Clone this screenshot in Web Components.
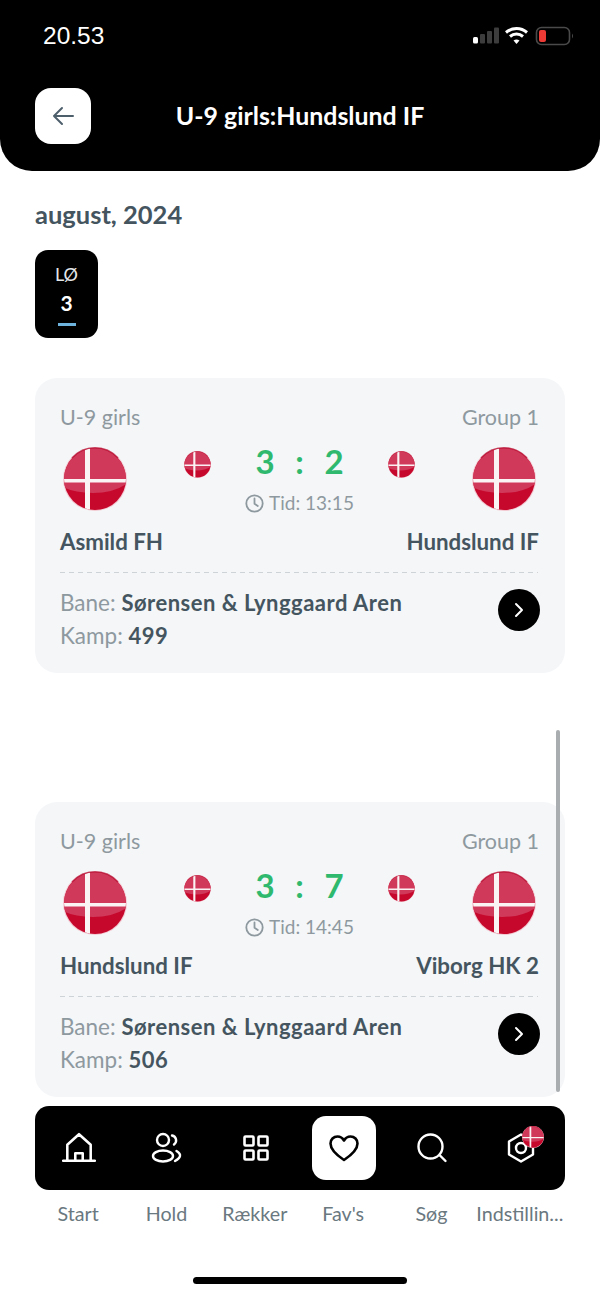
<!DOCTYPE html>
<html lang="da"><head><meta charset="utf-8"><title>U-9 girls</title>
<style>html,body{margin:0;padding:0;background:#fff}body{width:600px;height:1297px;overflow:hidden;font-family:Lato,"Open Sans",sans-serif}</style>
</head><body>
<app-screen></app-screen>
<script>
const def=(name,html,init)=>customElements.define(name,class extends HTMLElement{
  constructor(){super();this.attachShadow({mode:'open'}).innerHTML=typeof html==='function'?html(this):html;}
  connectedCallback(){ if(!this._r&&typeof html==='function'){this._r=1;this.shadowRoot.innerHTML=html(this);} }
});
let uid=0;
def('dk-flag',el=>{const s=el.getAttribute('size')||64;const id='c'+(++uid);return `<style>:host{display:block;width:${s}px;height:${s}px}svg{display:block;width:100%;height:100%}</style>
<svg viewBox="0 0 64 64"><defs><clipPath id="${id}"><circle cx="32" cy="32" r="31"/></clipPath></defs>
<circle cx="32" cy="32" r="32" fill="#f3c9d2"/>
<g clip-path="url(#${id})"><rect width="64" height="64" fill="#c6082d"/>
<path d="M-2-2H66V35Q52 46 30 46 10 46-2 39Z" fill="#d0395a"/>
<rect x="22" width="5" height="64" fill="#fbf4f5"/><rect y="32" width="64" height="3.500" fill="#fbf4f5"/></g>
<path d="M9 11A31 31 0 0 1 55 11" fill="none" stroke="#b3082c" stroke-width="1.4" opacity=".7"/></svg>`});

def('status-bar',`<style>:host{display:flex;justify-content:space-between;align-items:center;height:72px;padding:0 26px 0 43px;color:#fff}
.t{font:500 24.500px/1 "Liberation Sans",sans-serif}svg{display:block}</style>
<span class="t">20.53</span>
<svg width="102" height="20" viewBox="0 0 102 20">
<rect x="1" y="11" width="5" height="6.500" rx="1.500" fill="#fff"/><rect x="8" y="8" width="5" height="9.500" rx="1" fill="#3d3d3d"/><rect x="15" y="5" width="5" height="12.500" rx="1" fill="#3d3d3d"/><rect x="22" y="1.500" width="5" height="16" rx="1" fill="#3d3d3d"/>
<g fill="none" stroke="#fff" stroke-width="3"><path d="M34 6.500A16 16 0 0 1 55 6.500"/><path d="M38 10.500A10 10 0 0 1 51 10.500"/></g><path d="M41.500 14.500A5 5 0 0 1 47.500 14.500L44.500 18Z" fill="#fff"/>
<rect x="64.500" y="1.500" width="33" height="17" rx="5" fill="none" stroke="#4a4a4a" stroke-width="1.600"/><rect x="67" y="4" width="7" height="12" rx="2" fill="#ee3a35"/><path d="M100 7.500Q102 10 100 12.500Z" fill="#4a4a4a"/>
</svg>`);

def('app-header',el=>`<style>:host{display:block;height:171px;background:#000;border-radius:0 0 32px 32px;box-sizing:border-box}
.row{display:grid;grid-template-columns:56px 1fr 56px;align-items:center;margin:16px 35px 0}
button{all:unset;width:56px;height:56px;background:#fff;border-radius:16px;display:flex;align-items:center;justify-content:center}
h1{margin:-2px 0 0;text-align:center;color:#fff;font:700 24.900px/1 Lato,sans-serif}</style>
<status-bar></status-bar>
<div class="row"><button aria-label="Tilbage"><svg width="22" height="20" viewBox="0 0 22 20" fill="none" stroke="#4d5f6b" stroke-width="2" stroke-linecap="round" stroke-linejoin="round"><path d="M21 10H2M10 2 2 10l8 8"/></svg></button>
<h1>${el.getAttribute('title')}</h1><span></span></div>`);

def('day-chip',el=>`<style>:host{display:flex;flex-direction:column;align-items:center;width:63px;height:88px;background:#000;border-radius:13px;color:#fff;box-sizing:border-box;padding-top:14px}
.d{font:400 18px/20px Lato,sans-serif;color:#e4e7e9}.n{font:700 21px/24px Lato,sans-serif;margin-top:7px}i{display:block;width:18px;height:2.500px;background:#6db3de;margin-top:8px}</style>
<span class="d">${el.getAttribute('day')}</span><span class="n">${el.getAttribute('num')}</span><i></i>`);

def('match-card',el=>{const a=n=>el.getAttribute(n);return `<style>:host{display:block;background:#f4f6f8;border-radius:22px;height:295px;box-sizing:border-box;padding:27px 26px 0 25px;color:#455560;font-family:Lato,sans-serif}
.top{display:flex;justify-content:space-between;font-size:21.500px;line-height:25px;color:#8e999f}
.mid{display:grid;grid-template-columns:64px 1fr 64px;margin:17px 3px 0 3px;height:64px}
.c{display:flex;justify-content:center;gap:0}
.sc{width:177px;text-align:center}
.small{margin-top:4px}
.score{display:grid;grid-template-columns:repeat(3,34.500px);justify-content:center;color:#2fb96f;font:700 33px/34px Lato,sans-serif;margin-top:-3px}
.time{display:flex;align-items:center;justify-content:center;gap:5px;font-size:19px;line-height:22px;color:#8e999f;margin-top:14px}
.teams{display:flex;justify-content:space-between;font-weight:700;font-size:22.300px;line-height:26px;margin-top:18px}
hr{border:0;height:1px;margin:17px 1px 0 0;background:repeating-linear-gradient(90deg,#cdd3d7 0 5px,transparent 5px 9px)}
.foot{display:flex;justify-content:space-between;margin-top:16px}
.info{font-size:22.500px;line-height:33px;color:#8e999f;margin-top:-3px}b{color:#455560;font-weight:700;font-size:22px;letter-spacing:.5px}
.go{width:42px;height:42px;border-radius:50%;background:#000;display:flex;align-items:center;justify-content:center;margin:0 -1px 0 0}</style>
<div class="top"><span>${a('league')}</span><span>${a('group')}</span></div>
<div class="mid"><dk-flag></dk-flag>
<div class="c"><dk-flag class="small" size="27"></dk-flag>
<div class="sc"><div class="score"><span>${a('h')}</span><span>:</span><span>${a('a')}</span></div>
<div class="time"><svg width="19" height="19" viewBox="0 0 19 19" fill="none" stroke="#8e999f" stroke-width="1.800" stroke-linecap="round" stroke-linejoin="round"><circle cx="9.500" cy="9.500" r="8.200"/><path d="M9.500 4.500v5.200l3.300 2.300"/></svg><span>Tid: ${a('time')}</span></div></div>
<dk-flag class="small" size="27"></dk-flag></div>
<dk-flag></dk-flag></div>
<div class="teams"><span>${a('home')}</span><span>${a('away')}</span></div>
<hr>
<div class="foot"><div class="info"><div>Bane: <b>${a('venue')}</b></div><div>Kamp: <b>${a('game')}</b></div></div>
<div class="go"><svg width="12" height="18" viewBox="0 0 12 18" fill="none" stroke="#fff" stroke-width="2" stroke-linecap="round" stroke-linejoin="round"><path d="M3 3l6 6-6 6"/></svg></div></div>`});

const ic={
home:`<svg width="34" height="34" viewBox="0 0 32 32" fill="none" stroke="#fff" stroke-width="2.400" stroke-linejoin="round" stroke-linecap="round"><path d="M1 28h30M5 28V13L16 3l11 10v15M12.500 28v-7h7v7"/></svg>`,
team:`<svg width="34" height="34" viewBox="0 0 34 34" fill="none" stroke="#fff" stroke-width="2.400" stroke-linecap="round"><circle cx="13" cy="9" r="6"/><ellipse cx="13" cy="25" rx="10" ry="5.500"/><path d="M22 4.500a5 5 0 0 1 2 9M26.500 20q4 2.500 3.500 5t-5 5"/></svg>`,
grid:`<svg width="26" height="26" viewBox="0 0 26 26" fill="none" stroke="#fff" stroke-width="2.600"><rect x="1.500" y="1.500" width="9" height="9" rx="1"/><rect x="15.500" y="1.500" width="9" height="9" rx="1"/><rect x="1.500" y="15.500" width="9" height="9" rx="1"/><rect x="15.500" y="15.500" width="9" height="9" rx="1"/></svg>`,
heart:`<svg width="30" height="27" viewBox="0 0 30 27" fill="none" stroke="#000" stroke-width="2.600" stroke-linejoin="round"><path d="M15 25C6 19 1.500 14 1.500 8.500 1.500 4.500 4.500 1.500 8.500 1.500c2.800 0 5 1.400 6.500 4 1.500-2.600 3.700-4 6.500-4 4 0 7 3 7 7C28.500 14 24 19 15 25Z"/></svg>`,
search:`<svg width="32" height="32" viewBox="0 0 32 32" fill="none" stroke="#fff" stroke-width="2.400" stroke-linecap="round"><circle cx="14.500" cy="14.500" r="12"/><path d="M24 23.500l5.500 5.500"/></svg>`,
gear:`<span style="position:relative;display:block;width:30px;height:30px"><svg width="30" height="30" viewBox="0 0 30 30" fill="none" stroke="#fff" stroke-width="2.400" stroke-linejoin="round"><path d="M15 1.500 27 8.500v13L15 28.500 3 21.500v-13Z"/><circle cx="15" cy="15" r="5"/></svg><dk-flag size="22" style="position:absolute;left:16px;top:-7px"></dk-flag></span>`};

def('nav-bar',el=>{
 const items=[['home','Start'],['team','Hold'],['grid','Rækker'],['heart',"Fav's",1],['search','Søg'],['gear','Indstillin...']];
 return `<style>:host{display:block;font-family:Lato,sans-serif}
.bar,.labels{display:grid;grid-template-columns:repeat(6,1fr)}
.bar{height:84px;background:#000;border-radius:14px;align-items:center;justify-items:center}
.s{display:flex;align-items:center;justify-content:center;width:64px;height:64px;border-radius:14px}
.s.on{background:#fff}
.labels{margin-top:12px;text-align:center;font-size:19.700px;line-height:24px;color:#6a7880;white-space:nowrap}
.labels span{margin-left:-2px}</style>
<nav class="bar">${items.map(i=>`<div class="s${i[2]?' on':''}">${ic[i[0]]}</div>`).join('')}</nav>
<div class="labels">${items.map(i=>`<span>${i[1]}</span>`).join('')}</div>`});

def('app-screen',`<style>:host{display:block;position:relative;height:1297px;overflow:hidden;font-family:Lato,sans-serif}
h2{margin:29px 35px 0;font:700 25.500px/28px Lato,sans-serif;color:#455560}
day-chip{margin:22px 0 0 35px}
match-card{margin:0 35px}
.list{display:flex;flex-direction:column;gap:129px;margin-top:40px}
nav-bar{margin:9px 35px 0}
.scroll{position:absolute;left:556px;top:730px;width:4px;height:362px;border-radius:2px;background:#a9adb0}
.home{width:214px;height:7px;border-radius:4px;background:#000;margin:51px auto 0}</style>
<app-header title="U-9 girls:Hundslund IF"></app-header>
<h2>august, 2024</h2>
<day-chip day="LØ" num="3"></day-chip>
<div class="list">
<match-card league="U-9 girls" group="Group 1" h="3" a="2" time="13:15" home="Asmild FH" away="Hundslund IF" venue="Sørensen &amp; Lynggaard Aren" game="499"></match-card>
<match-card league="U-9 girls" group="Group 1" h="3" a="7" time="14:45" home="Hundslund IF" away="Viborg HK 2" venue="Sørensen &amp; Lynggaard Aren" game="506"></match-card>
</div>
<nav-bar></nav-bar>
<div class="home"></div>
<div class="scroll"></div>`);
</script>
</body></html>
